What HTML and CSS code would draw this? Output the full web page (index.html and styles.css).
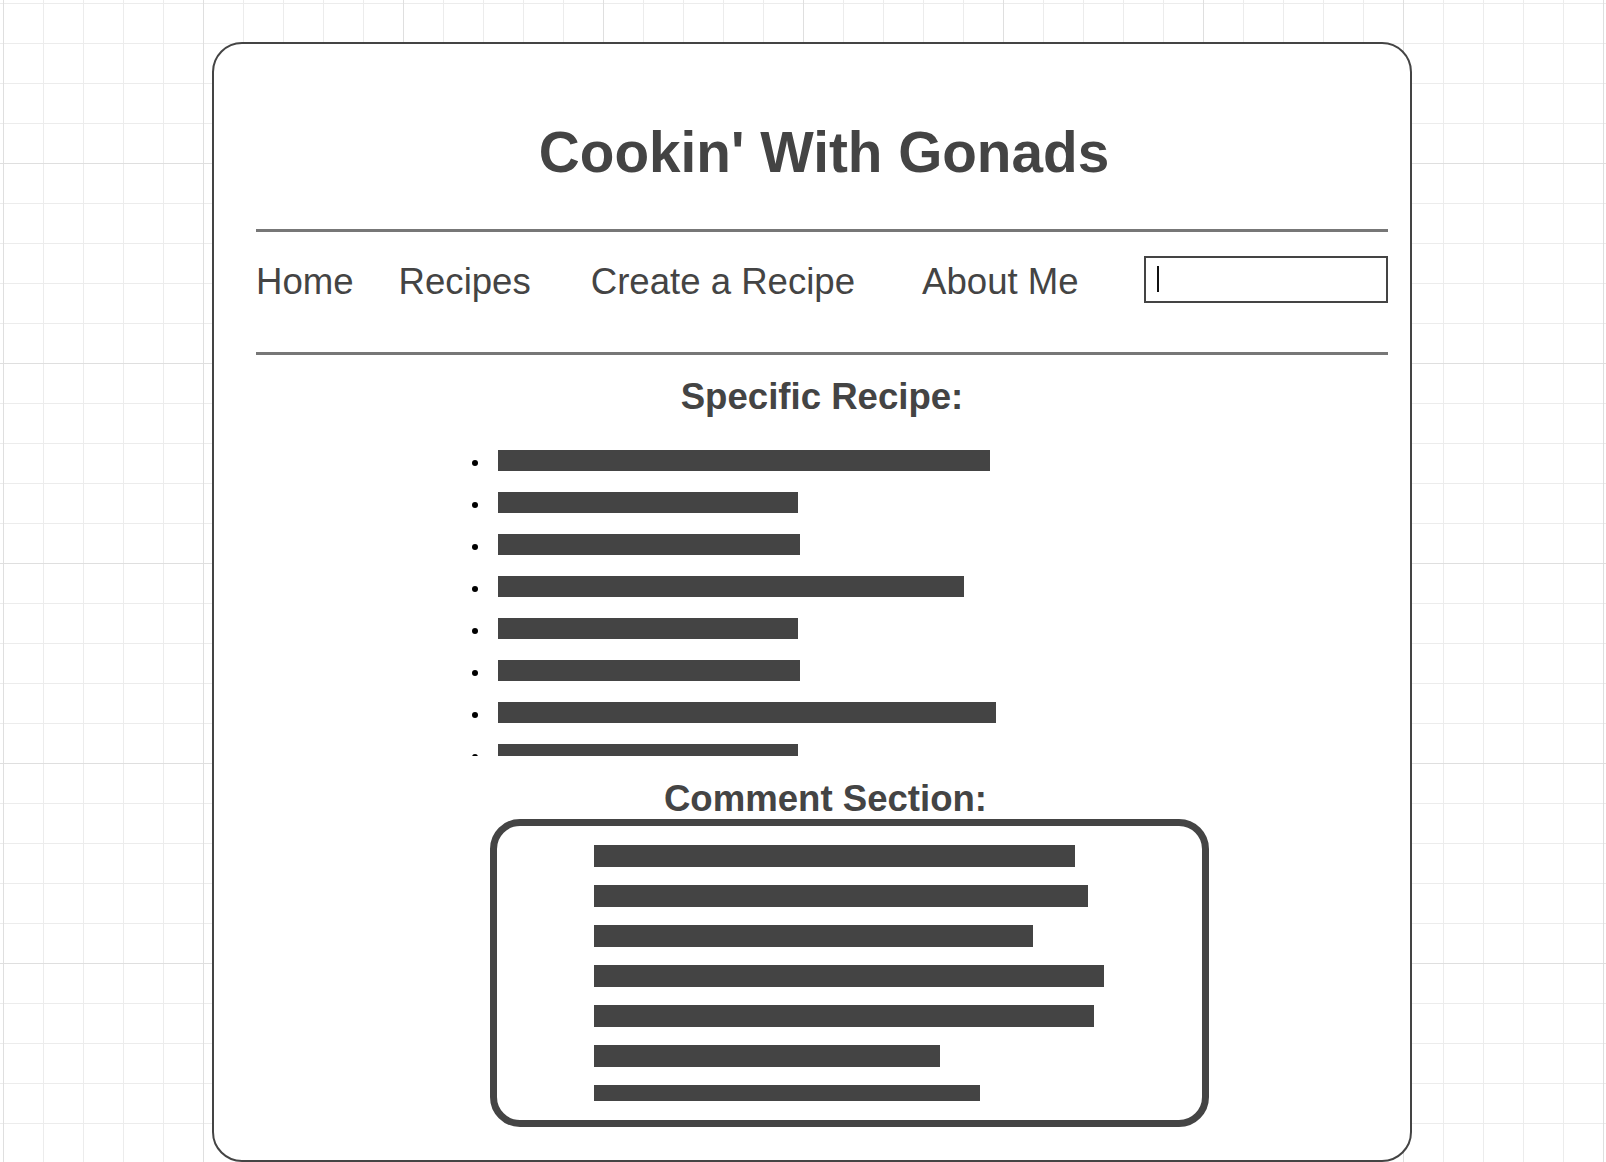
FILE: index.html
```html
<!DOCTYPE html>
<html lang="en">
<head>
<meta charset="utf-8">
<title>Cookin' With Gonads</title>
<link rel="stylesheet" href="styles.css">
</head>
<body>
<main class="card">
  <h1 class="title">Cookin' With Gonads</h1>
  <div class="rule"></div>
  <nav class="nav">
    <a class="nav-link nav-home">Home</a>
    <a class="nav-link nav-recipes">Recipes</a>
    <a class="nav-link nav-create">Create a Recipe</a>
    <a class="nav-link nav-about">About Me</a>
    <div class="search"><span class="caret"></span></div>
  </nav>
  <div class="rule"></div>
  <h2 class="heading">Specific Recipe:</h2>
  <ul class="recipe-list">
    <li><span class="bar" style="width:492px"></span></li>
    <li><span class="bar" style="width:300px"></span></li>
    <li><span class="bar" style="width:302px"></span></li>
    <li><span class="bar" style="width:466px"></span></li>
    <li><span class="bar" style="width:300px"></span></li>
    <li><span class="bar" style="width:302px"></span></li>
    <li><span class="bar" style="width:498px"></span></li>
    <li><span class="bar" style="width:300px"></span></li>
  </ul>
  <h2 class="heading heading-comments">Comment Section:</h2>
  <section class="comments">
    <div class="comments-inner">
      <span class="cbar" style="width:481px"></span>
      <span class="cbar" style="width:494px"></span>
      <span class="cbar" style="width:439px"></span>
      <span class="cbar" style="width:510px"></span>
      <span class="cbar" style="width:500px"></span>
      <span class="cbar" style="width:346px"></span>
      <span class="cbar" style="width:386px"></span>
    </div>
  </section>
</main>
</body>
</html>
```

FILE: styles.css
```css
html, body {
  margin: 0;
  padding: 0;
}

body {
  width: 1606px;
  height: 1162px;
  overflow: hidden;
  font-family: "Liberation Sans", Arial, sans-serif;
  color: #444;
  background-color: #fff;
  background-image:
    linear-gradient(to right, #dfdfdf 1px, transparent 1px),
    linear-gradient(to bottom, #dfdfdf 1px, transparent 1px),
    linear-gradient(to right, #ececec 1px, transparent 1px),
    linear-gradient(to bottom, #ececec 1px, transparent 1px);
  background-size: 200px 100%, 100% 200px, 40px 100%, 100% 40px;
  background-position: 3px 0, 0 163px, 3px 0, 0 3px;
}

.card {
  box-sizing: border-box;
  margin: 42px 0 0 212px;
  width: 1200px;
  height: 1120px;
  border: 2px solid #444;
  border-radius: 30px;
  background: #fff;
  padding: 0 22px 0 42px;
  display: flex;
  flex-direction: column;
  overflow: hidden;
}

.title {
  margin: 77px 0 0 0;
  padding-left: 4px;
  font-size: 56.7px;
  line-height: 64px;
  font-weight: bold;
  text-align: center;
}

.rule {
  height: 3px;
  background: #777;
  flex: none;
}

.title + .rule {
  margin-top: 44px;
}

.nav {
  display: flex;
  align-items: flex-start;
  padding: 24px 0 47px 0;
}

.nav-link {
  font-size: 36.6px;
  line-height: 47px;
  padding-top: 2px;
  color: #444;
  white-space: nowrap;
}

.nav-home { margin-left: 0; }
.nav-recipes { margin-left: 45px; }
.nav-create { margin-left: 60px; }
.nav-about { margin-left: 67px; }

.search {
  box-sizing: border-box;
  margin-left: auto;
  width: 244px;
  height: 47px;
  border: 2px solid #444;
  display: flex;
  align-items: flex-start;
}

.caret {
  margin: 8px 0 0 11px;
  width: 2px;
  height: 26px;
  background: #111;
}

.heading {
  margin: 22px 0 0 0;
  font-size: 36.6px;
  line-height: 40px;
  font-weight: bold;
  text-align: center;
}

.recipe-list {
  list-style: none;
  margin: 22px 0 0 216px;
  padding: 0;
  height: 317px;
  overflow: hidden;
  flex: none;
}

.recipe-list li {
  height: 42px;
  display: flex;
  align-items: center;
}

.recipe-list li::before {
  content: "";
  width: 6px;
  height: 6px;
  border-radius: 50%;
  background: #000;
  margin: 6px 20px 0 0;
  flex: none;
}

.bar,
.cbar {
  display: block;
  height: 21px;
  background: #444;
  flex: none;
}

.heading-comments {
  margin-top: 23px;
  padding-left: 7px;
}

.comments {
  box-sizing: border-box;
  margin: 0 0 0 234px;
  width: 719px;
  height: 308px;
  border: 7px solid #444;
  border-radius: 30px;
  padding: 19px 0 19px 97px;
  flex: none;
}

.comments-inner {
  height: 256px;
  overflow: hidden;
  display: flex;
  flex-direction: column;
  gap: 18px;
}

.cbar {
  height: 22px;
}
```
